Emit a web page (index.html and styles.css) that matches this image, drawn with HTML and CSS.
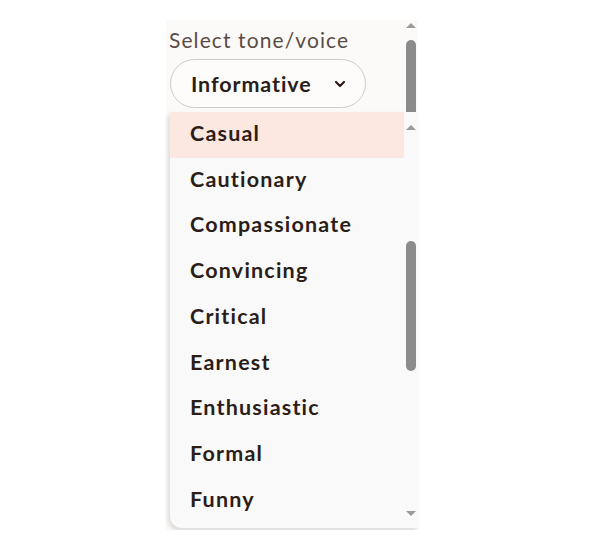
FILE: index.html
```html
<!DOCTYPE html>
<html>
<head>
<meta charset="utf-8">
<link rel="stylesheet" href="styles.css">
</head>
<body>
<div class="frame">
  <div class="content">
    <div class="label">Select tone/voice</div>
    <div class="pill">
      <span>Informative</span>
      <svg class="chev" width="12" height="8" viewBox="0 0 12 8"><path d="M2 2 L6 6 L10 2" fill="none" stroke="#2b1d17" stroke-width="2.2" stroke-linecap="round" stroke-linejoin="round"/></svg>
    </div>
  </div>
  <div class="sbar outer">
    <div class="arrow up"></div>
    <div class="thumb outer-thumb"></div>
  </div>
  <div class="menu">
    <ul class="list">
      <li class="item active">Casual</li>
      <li class="item">Cautionary</li>
      <li class="item">Compassionate</li>
      <li class="item">Convincing</li>
      <li class="item">Critical</li>
      <li class="item">Earnest</li>
      <li class="item">Enthusiastic</li>
      <li class="item">Formal</li>
      <li class="item">Funny</li>
    </ul>
    <div class="sbar inner">
      <div class="arrow up"></div>
      <div class="track"><div class="thumb inner-thumb"></div></div>
      <div class="arrow down"></div>
    </div>
  </div>
</div>
</body>
</html>
```

FILE: styles.css
```css
html, body {
  margin: 0;
  padding: 0;
  background: #ffffff;
}
body {
  font-family: Lato, "Open Sans", sans-serif;
}
.frame {
  position: relative;
  margin: 20px 0 0 166px;
  width: 252px;
  height: 510px;
  background: #fcfaf8;
  display: flex;
}
.content {
  flex: 1;
  padding: 8px 0 0 3px;
}
.label {
  font-size: 21px;
  line-height: 24px;
  color: #5b4b46;
  letter-spacing: 1.1px;
}
.pill {
  margin-top: 7px;
  margin-left: 1px;
  height: 47px;
  border: 1.5px solid #cdcac7;
  border-radius: 26px;
  background: #fdfcfb;
  display: flex;
  align-items: center;
  padding-left: 20px;
  box-sizing: content-box;
  width: 174px;
  font-size: 21.5px;
  font-weight: 700;
  color: #2b1d17;
  letter-spacing: 0.9px;
}
.pill span { flex: 1; }
.chev { margin-right: 19px; }
.sbar {
  width: 14px;
  display: flex;
  flex-direction: column;
  align-items: center;
}
.arrow {
  width: 0;
  height: 0;
  border-left: 5px solid transparent;
  border-right: 5px solid transparent;
}
.arrow.up { border-bottom: 5px solid #9a9a9a; }
.arrow.down { border-top: 5px solid #9a9a9a; }
.outer .arrow.up { margin-top: 3px; }
.thumb {
  width: 10px;
  background: #8b8b8b;
  border-radius: 5px;
}
.outer-thumb {
  margin-top: 12px;
  height: 120px;
}
.menu {
  position: absolute;
  top: 92px;
  left: 4px;
  right: 0;
  height: 416px;
  background: #f9f9f9;
  border-bottom-left-radius: 12px;
  box-shadow: -2px 3px 5px rgba(0, 0, 0, 0.13);
  display: flex;
}
.list {
  list-style: none;
  margin: 0;
  padding: 0;
  flex: 1;
}
.item {
  height: 45.75px;
  display: flex;
  align-items: center;
  padding-left: 20px;
  padding-bottom: 4px;
  box-sizing: border-box;
  font-size: 21.5px;
  font-weight: 700;
  color: #2b1d17;
  letter-spacing: 1.2px;
}
.item.active {
  background: #fde7e1;
}
.inner .arrow.up { margin-top: 13px; }
.inner .track {
  flex: 1;
  display: flex;
  justify-content: center;
  padding-top: 111px;
}
.inner-thumb {
  height: 130px;
}
.inner .arrow.down { margin-bottom: 12px; }
```
